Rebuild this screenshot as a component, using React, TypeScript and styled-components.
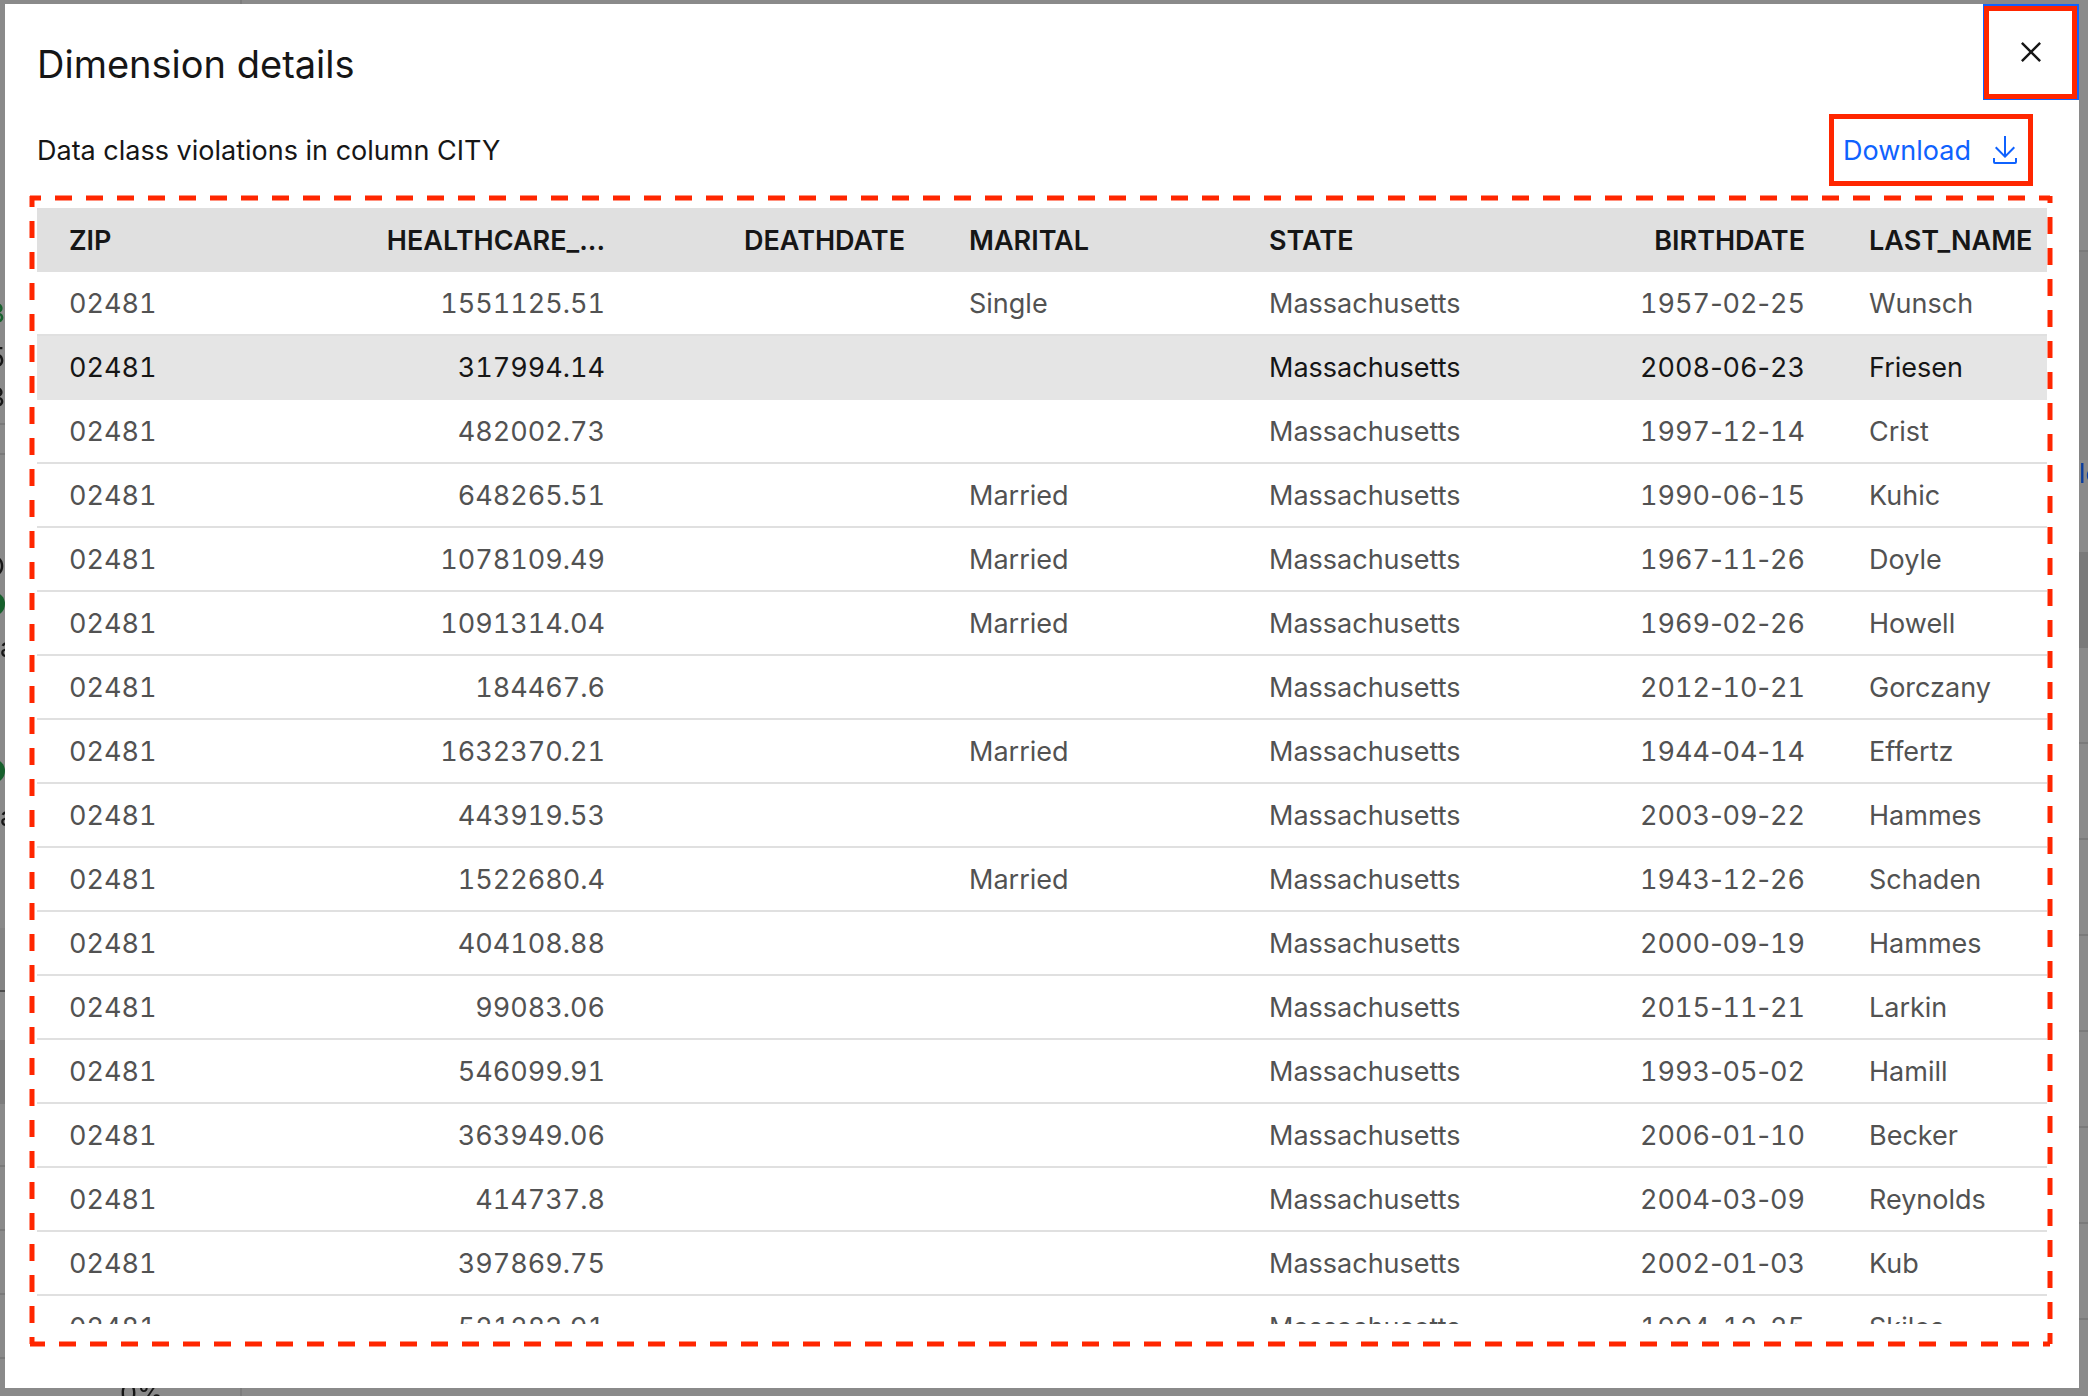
import React from "react";
import styled, { createGlobalStyle } from "styled-components";

const GlobalStyle = createGlobalStyle`
  *, *::before, *::after { box-sizing: border-box; }
  html, body { margin: 0; overflow: hidden; }
  body {
    background: #8a8a8a;
    color: #161616;
    font-family: Inter, "Liberation Sans", sans-serif;
    font-size: 27px;
    line-height: 36px;
  }
`;

/* ---------- dimmed page behind the dialog ---------- */

const Backdrop = styled.div`
  position: fixed;
  inset: 0;
  display: flex;
  justify-content: space-between;
  overflow: hidden;
`;

const Rail = styled.div<{ $width: number }>`
  display: flex;
  flex-direction: column;
  width: ${(p) => p.$width}px;
  overflow: hidden;
`;

const Strip = styled.div<{ $height: number; $color?: string }>`
  flex: none;
  width: 100%;
  height: ${(p) => p.$height}px;
  background: ${(p) => p.$color ?? "transparent"};
`;

const RailText = styled.span<{ $color: string; $side: "start" | "end" }>`
  flex: none;
  align-self: flex-${(p) => p.$side};
  line-height: 28px;
  color: ${(p) => p.$color};
`;

const Dot = styled.span`
  flex: none;
  align-self: flex-end;
  width: 24px;
  height: 24px;
  border-radius: 50%;
  background: #16602c;
`;

const RailFooter = styled.div`
  display: flex;
  flex: 1;
  align-items: flex-end;
  padding-left: 115px;
`;

const Percent = styled.span`
  height: 12px;
  line-height: 20px;
  color: #161616;
`;

const Divider = styled.div`
  width: 2px;
  height: 100%;
  margin-left: 76px;
  background: #7d7d7d;
`;

type Piece =
  | { kind: "strip"; height: number; color?: string }
  | { kind: "text"; text: string; color: string; side: "start" | "end" }
  | { kind: "dot" };

const gap = (height: number, color?: string): Piece => ({ kind: "strip", height, color });
const text = (value: string, side: "start" | "end", color = "#161616"): Piece => ({
  kind: "text",
  text: value,
  color,
  side,
});
const dot: Piece = { kind: "dot" };
const rule = gap(2, "#7a7a7a");

const leftPieces: Piece[] = [
  gap(300), text("3", "end", "#16602c"), gap(16), text("5", "end"), gap(12), text("3", "end"),
  gap(11), rule, gap(28), rule, gap(98), text("O", "end"), gap(11), dot, gap(18), text("a", "start"),
  gap(97), dot, gap(20), text("a", "start"), gap(97), gap(62, "#848484"), gap(2, "#4c4c4c"),
  gap(48), gap(64, "#7c7c7c"), gap(61), rule, gap(62), rule, gap(62), rule, gap(62), rule,
];

const rightPieces: Piece[] = [
  gap(250), rule, gap(208, "#848484"), text("lo", "start", "#0a3d9e"), gap(64),
  gap(96, "#7a7a7a"), gap(94), rule, gap(94), rule, gap(94), rule, gap(94), rule,
  gap(94), rule, gap(94), rule, gap(94), rule,
];

function Pieces({ items }: { items: Piece[] }) {
  return (
    <>
      {items.map((p, i) => {
        if (p.kind === "dot") return <Dot key={i} />;
        if (p.kind === "text") return <RailText key={i} $color={p.color} $side={p.side}>{p.text}</RailText>;
        return <Strip key={i} $height={p.height} $color={p.color} />;
      })}
    </>
  );
}

/* ---------- dialog ---------- */

const Overlay = styled.div`
  position: fixed;
  inset: 0;
  display: flex;
  padding: 4px 9px 8px 5px;
`;

const Modal = styled.section`
  display: flex;
  flex: 1;
  flex-direction: column;
  min-width: 0;
  padding-bottom: 64px;
  background: #ffffff;
`;

const ModalHeader = styled.header`
  display: flex;
  flex: none;
  justify-content: space-between;
  padding-left: 32px;
`;

const Title = styled.h2`
  margin: 0;
  padding-top: 36px;
  font-size: 38px;
  font-weight: 400;
  line-height: 48px;
`;

const CloseButton = styled.button`
  position: relative;
  display: flex;
  align-items: center;
  justify-content: center;
  width: 96px;
  height: 96px;
  padding: 0;
  border: 4px solid #0f62fe;
  background: #ffffff;
  color: #161616;

  &::after {
    content: "";
    position: absolute;
    inset: -2px -2px -3px -3px;
    border: 5px solid #ff2600;
  }
`;

const Toolbar = styled.div`
  display: flex;
  flex: none;
  align-items: center;
  justify-content: space-between;
  height: 100px;
  margin-bottom: 8px;
  padding: 0 46px 0 32px;
`;

const Subtitle = styled.p`
  margin: 0;
  padding-top: 2px;
`;

const DownloadButton = styled.button`
  display: flex;
  align-items: center;
  justify-content: space-between;
  min-width: 204px;
  height: 72px;
  padding: 0 7px 0 9px;
  border: 5px solid #ff2600;
  background: transparent;
  color: #0f62fe;
  font: inherit;
`;

const ButtonLabel = styled.span`
  padding-top: 2px;
`;

const TableArea = styled.div`
  position: relative;
  flex: 1;
  min-height: 0;
  margin: 0 32px;
`;

const TableScroll = styled.div`
  height: 100%;
  overflow: hidden;
`;

const Table = styled.table`
  width: 2100px;
  table-layout: fixed;
  border-collapse: separate;
  border-spacing: 0;
`;

type Align = "left" | "right";

const HeadCell = styled.th<{ $align: Align }>`
  height: 64px;
  padding: 2px 32px 0;
  background: #e0e0e0;
  font-weight: 600;
  text-align: ${(p) => p.$align};
  white-space: nowrap;
`;

const Cell = styled.td<{ $align: Align }>`
  height: 64px;
  padding: 2px 32px 0;
  border-bottom: 2px solid #e0e0e0;
  font-variant-numeric: tabular-nums;
  text-align: ${(p) => p.$align};
  white-space: nowrap;
`;

/* keeps the hyphen at its own width between tabular digits */
const Hyphen = styled.span`
  font-variant-numeric: normal;
`;

const Row = styled.tr<{ $active: boolean }>`
  color: ${(p) => (p.$active ? "#161616" : "#525252")};
  background: ${(p) => (p.$active ? "#e5e5e5" : "#ffffff")};

  ${Cell} {
    border-bottom-color: ${(p) => (p.$active ? "#e5e5e5" : "#e0e0e0")};
  }
`;

const Outline = styled.svg`
  position: absolute;
  top: -10px;
  left: -5px;
  width: calc(100% + 8px);
  height: calc(100% + 30px);
  overflow: visible;
  pointer-events: none;
  stroke: #ff2600;
  stroke-width: 5;
  stroke-dasharray: 17 14;
`;

const columns: { label: string; align: Align }[] = [
  { label: "ZIP", align: "left" },
  { label: "HEALTHCARE_...", align: "right" },
  { label: "DEATHDATE", align: "right" },
  { label: "MARITAL", align: "left" },
  { label: "STATE", align: "left" },
  { label: "BIRTHDATE", align: "right" },
  { label: "LAST_NAME", align: "left" },
];

const records: [string, string, string, string][] = [
  ["1551125.51", "Single", "1957-02-25", "Wunsch"],
  ["317994.14", "", "2008-06-23", "Friesen"],
  ["482002.73", "", "1997-12-14", "Crist"],
  ["648265.51", "Married", "1990-06-15", "Kuhic"],
  ["1078109.49", "Married", "1967-11-26", "Doyle"],
  ["1091314.04", "Married", "1969-02-26", "Howell"],
  ["184467.6", "", "2012-10-21", "Gorczany"],
  ["1632370.21", "Married", "1944-04-14", "Effertz"],
  ["443919.53", "", "2003-09-22", "Hammes"],
  ["1522680.4", "Married", "1943-12-26", "Schaden"],
  ["404108.88", "", "2000-09-19", "Hammes"],
  ["99083.06", "", "2015-11-21", "Larkin"],
  ["546099.91", "", "1993-05-02", "Hamill"],
  ["363949.06", "", "2006-01-10", "Becker"],
  ["414737.8", "", "2004-03-09", "Reynolds"],
  ["397869.75", "", "2002-01-03", "Kub"],
  ["521283.91", "", "1994-12-25", "Skiles"],
];

function DateText({ value }: { value: string }) {
  const [year, month, day] = value.split("-");
  return (
    <>
      {year}<Hyphen>-</Hyphen>{month}<Hyphen>-</Hyphen>{day}
    </>
  );
}

const rows = records.map(([expenses, marital, birth, last]) => [
  "02481", expenses, "", marital, "Massachusetts", <DateText value={birth} />, last,
]);

export default function App() {
  return (
    <>
      <GlobalStyle />
      <Backdrop aria-hidden="true">
        <Rail $width={5}><Pieces items={leftPieces} /></Rail>
        <RailFooter>
          <Percent>0%</Percent>
          <Divider />
        </RailFooter>
        <Rail $width={9}><Pieces items={rightPieces} /></Rail>
      </Backdrop>
      <Overlay>
        <Modal role="dialog" aria-modal="true" aria-labelledby="dialog-title">
          <ModalHeader>
            <Title id="dialog-title">Dimension details</Title>
            <CloseButton type="button" aria-label="Close">
              <svg width="40" height="40" viewBox="0 0 32 32" fill="currentColor" aria-hidden="true">
                <path d="M24 9.4 22.6 8 16 14.6 9.4 8 8 9.4 14.6 16 8 22.6 9.4 24 16 17.4 22.6 24 24 22.6 17.4 16z" />
              </svg>
            </CloseButton>
          </ModalHeader>
          <Toolbar>
            <Subtitle>Data class violations in column CITY</Subtitle>
            <DownloadButton type="button">
              <ButtonLabel>Download</ButtonLabel>
              <svg width="32" height="32" viewBox="0 0 32 32" fill="currentColor" aria-hidden="true">
                <path d="M26 24v4H6v-4H4v4a2 2 0 0 0 2 2h20a2 2 0 0 0 2-2v-4zM26 14l-1.41-1.41L17 20.17V2h-2v18.17l-7.59-7.58L6 14l10 10z" />
              </svg>
            </DownloadButton>
          </Toolbar>
          <TableArea>
            <TableScroll>
              <Table>
                <thead>
                  <tr>
                    {columns.map((c) => (
                      <HeadCell key={c.label} scope="col" $align={c.align}>{c.label}</HeadCell>
                    ))}
                  </tr>
                </thead>
                <tbody>
                  {rows.map((row, r) => (
                    <Row key={r} $active={r === 1}>
                      {row.map((value, c) => (
                        <Cell key={c} $align={columns[c].align}>{value}</Cell>
                      ))}
                    </Row>
                  ))}
                </tbody>
              </Table>
            </TableScroll>
            <Outline aria-hidden="true">
              <line x1="-2" y1="0" x2="100%" y2="0" strokeDashoffset="6" />
              <line x1="100%" y1="-2" x2="100%" y2="100%" strokeDashoffset="10" />
              <line x1="100%" y1="100%" x2="-2" y2="100%" strokeDashoffset="10" />
              <line x1="0" y1="100%" x2="0" y2="-2" strokeDashoffset="10" />
            </Outline>
          </TableArea>
        </Modal>
      </Overlay>
    </>
  );
}
